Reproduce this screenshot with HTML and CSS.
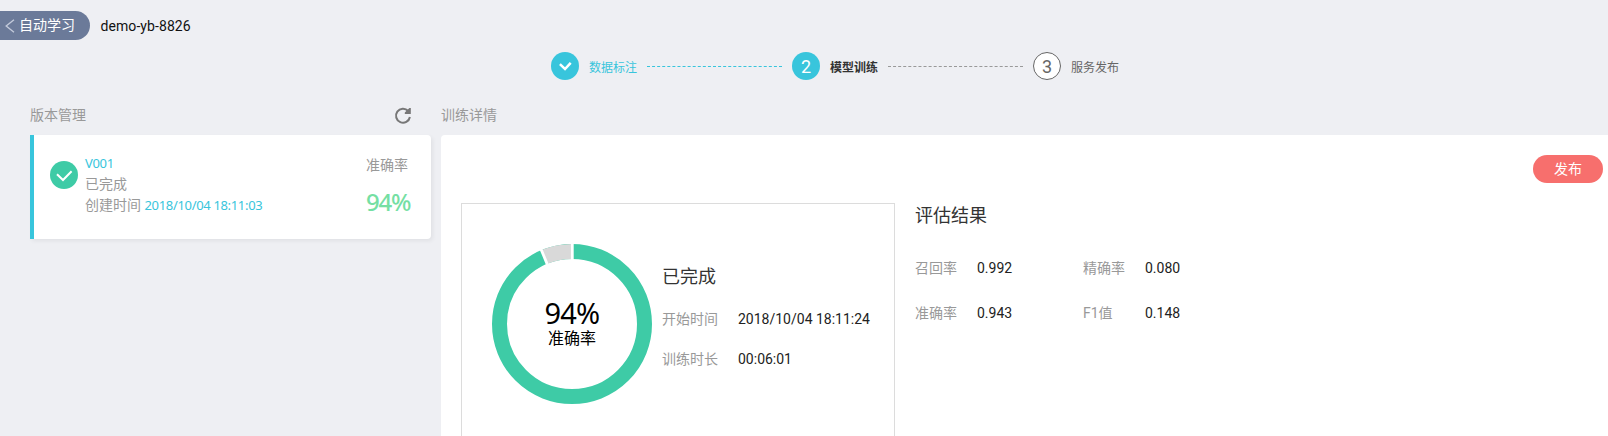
FILE: index.html
```html
<!DOCTYPE html>
<html lang="zh-CN">
<head>
<meta charset="utf-8">
<title>自动学习</title>
<link rel="stylesheet" href="styles.css">
</head>
<body>
<header class="topbar">
  <a class="back"><svg width="10" height="14" viewBox="0 0 10 14"><path d="M9 .8 1.2 7 9 13.2" fill="none" stroke="#c3cada" stroke-width="1.4"/></svg><span>自动学习</span></a>
  <h1 class="project">demo-yb-8826</h1>
</header>
<nav class="steps">
  <div class="step done">
    <span class="dot"><svg width="28" height="28" viewBox="0 0 28 28"><path d="m8.9 12.2 5.1 4.8 5.7-6.2" fill="none" stroke="#fff" stroke-width="2.5"/></svg></span>
    <span class="name">数据标注</span>
  </div>
  <i class="line line-done"></i>
  <div class="step current"><span class="dot">2</span><span class="name">模型训练</span></div>
  <i class="line"></i>
  <div class="step"><span class="dot">3</span><span class="name">服务发布</span></div>
</nav>
<main class="content">
  <section class="versions">
    <div class="heading"><span>版本管理</span>
      <svg class="refresh" width="18" height="18" viewBox="0 0 18 18"><path d="M14.2 4A7 7 0 1 0 15.9 10" fill="none" stroke="#777" stroke-width="2"/><path d="M16.8 1v6h-6V5.6L15.4 1z" fill="#777"/></svg>
    </div>
    <article class="card">
      <svg class="status" width="28" height="28" viewBox="0 0 28 28"><circle cx="14" cy="14" r="14" fill="#3ecba6"/><path d="m7 13.2 6 5.8 8.6-8.8" fill="none" stroke="#fff" stroke-width="2"/></svg>
      <div class="info">
        <div class="accent">V001</div>
        <div>已完成</div>
        <div>创建时间 <span class="accent">2018/10/04 18:11:03</span></div>
      </div>
      <div class="score"><span>准确率</span><strong>94%</strong></div>
    </article>
  </section>
  <section class="details">
    <div class="heading"><span>训练详情</span></div>
    <div class="panel">
      <div class="actions"><button class="publish">发布</button></div>
      <div class="columns">
        <div class="summary">
          <div class="chart">
            <svg class="ring" width="160" height="160" viewBox="-80 -80 160 160">
              <circle r="72.5" fill="none" stroke="#3ecba6" stroke-width="15"/>
              <path d="M0-72.5A72.5 72.5 0 0 0-27.8-67" fill="none" stroke="#d9d9d9" stroke-width="15"/>
              <path d="M.3-64V-81M-24.5-59.1-31-74.9" stroke="#fff" stroke-width="2.8"/>
            </svg>
            <div class="chart-label"><strong>94%</strong><span>准确率</span></div>
          </div>
          <div class="run">
            <h2>已完成</h2>
            <dl class="times">
              <dt>开始时间</dt><dd>2018/10/04 18:11:24</dd>
              <dt>训练时长</dt><dd>00:06:01</dd>
            </dl>
          </div>
        </div>
        <div class="results">
          <h2>评估结果</h2>
          <dl class="metrics">
            <dt>召回率</dt><dd>0.992</dd><dt>精确率</dt><dd>0.080</dd>
            <dt>准确率</dt><dd>0.943</dd><dt>F1值</dt><dd>0.148</dd>
          </dl>
        </div>
      </div>
    </div>
  </section>
</main>
</body>
</html>
```
FILE: styles.css
```css
* { box-sizing: border-box; }
html, body { height: 100%; }
body {
  margin: 0;
  overflow: hidden;
  background: #eeeff3;
  color: #999;
  font: 14px/21px Roboto, "Noto Sans CJK SC", sans-serif;
}
h1, h2, dl, dd { margin: 0; font-weight: 400; }
svg { display: block; flex: none; }
.topbar { display: flex; align-items: center; height: 52px; padding-bottom: 1px; }
.back {
  display: flex; align-items: center; gap: 4px;
  width: 90px; height: 29px; padding-left: 5px;
  border-radius: 0 15px 15px 0;
  background: #6b7a99; color: #fff;
}
.project { margin-left: 10.5px; padding-top: 2px; color: #111; font-size: 14px; letter-spacing: .08px; }
.steps { display: flex; align-items: center; height: 28px; margin-left: 551px; }
.step { display: flex; align-items: center; gap: 10px; color: #666; font-size: 12px; }
.dot {
  display: flex; align-items: center; justify-content: center;
  width: 28px; height: 28px;
  border: 1px solid #666; border-radius: 50%;
  background: #fff; font-size: 18px;
}
.name { padding-top: 4px; }
.done .dot, .current .dot { border: 0; background: #38c5dc; color: #fff; }
.done { color: #38c5dc; }
.current .name { color: #333; font-weight: 700; }
.line { width: 135px; margin: 0 10px; border-top: 1px dashed #999; }
.line-done { border-color: #38c5dc; }
.content { display: flex; gap: 10px; height: 356px; padding: 25px 0 0 30px; }
.heading { display: flex; align-items: center; justify-content: space-between; height: 30px; padding-bottom: 10px; }
.versions { width: 401px; }
.refresh { margin-right: 19px; margin-top: 1px; }
.card {
  display: flex; height: 104px; padding: 18px 21px 0 16px;
  border-left: 4px solid #38c5dc; border-radius: 0 4px 4px 0;
  background: #fff; box-shadow: 2px 2px 4px rgba(0, 0, 0, .06);
}
.status { margin-top: 8px; }
.info { flex: 1; margin-left: 7px; }
.accent { color: #38c5dc; font-family: "Noto Sans", sans-serif; font-size: 13px; letter-spacing: -.33px; }
.score { display: flex; flex-direction: column; width: 44px; padding-top: 2px; }
.score strong { margin-top: 10px; color: #75dfa3; font: 500 24px/32px "Noto Sans", sans-serif; letter-spacing: -1.2px; }
.details { flex: 1; }
.panel { height: 301px; border-radius: 4px 0 0; background: #fff; overflow: hidden; }
.actions { display: flex; justify-content: flex-end; padding: 20px 5px 20px 0; }
.publish {
  width: 70px; height: 28px; padding: 0; border: 0; border-radius: 14px;
  background: #f76f6d; color: #fff; font: inherit;
}
.columns { display: flex; gap: 20px; padding-left: 20px; }
.summary { display: flex; width: 434px; height: 260px; padding: 40px 0 0 30px; border: 1px solid #dcdcdc; }
.chart { display: grid; }
.ring, .chart-label { grid-area: 1 / 1; }
.chart-label { display: flex; flex-direction: column; align-items: center; padding-top: 55px; color: #000; font-size: 16px; line-height: 17px; }
.chart-label strong { font: 29px/28px "Noto Sans", sans-serif; letter-spacing: -.8px; }
.chart-label span { margin-top: 3px; }
.run { margin-left: 10px; padding-top: 21px; }
h2 { color: #333; font-size: 18px; line-height: 24px; }
dl { display: grid; }
dd { color: #222; }
.times { grid-template-columns: 76px auto; row-gap: 19px; margin-top: 20px; }
.results { padding-top: 1px; }
.metrics { grid-template-columns: 62px 106px 62px auto; row-gap: 24px; margin-top: 30px; }
```
